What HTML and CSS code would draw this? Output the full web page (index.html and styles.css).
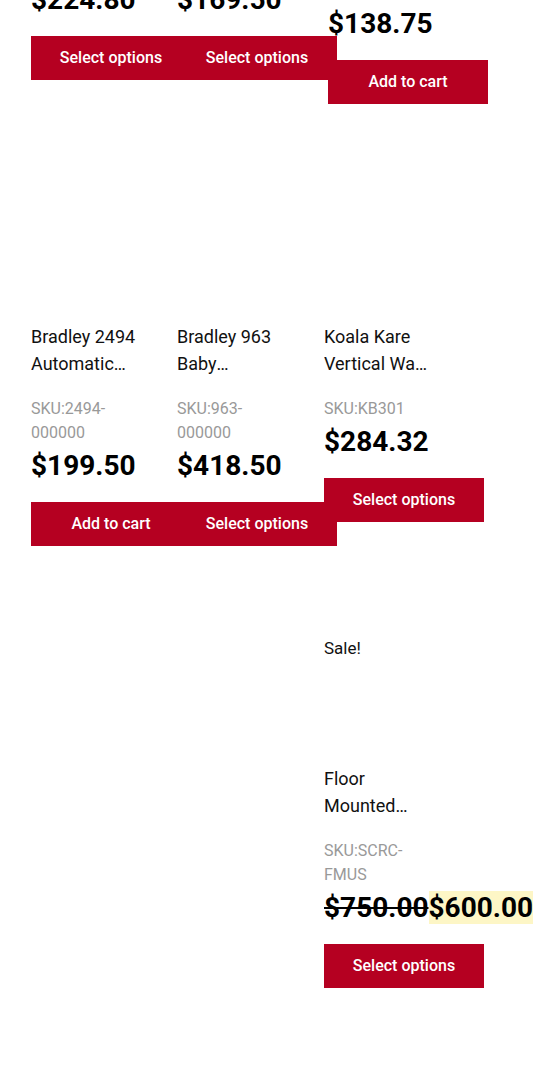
FILE: index.html
```html
<!DOCTYPE html>
<html lang="en">
<head>
<meta charset="utf-8">
<title>Products</title>
<link rel="stylesheet" href="styles.css">
</head>
<body>
<main class="shop">
  <ul class="products">
    <li class="product product--partial">
      <p class="price">$224.80</p>
      <a class="button" href="#">Select options</a>
    </li>
    <li class="product product--partial">
      <p class="price">$169.50</p>
      <a class="button" href="#">Select options</a>
    </li>
    <li class="product product--partial product--offset">
      <p class="price">$138.75</p>
      <a class="button" href="#">Add to cart</a>
    </li>

    <li class="product">
      <div class="thumb"></div>
      <h2 class="title">Bradley 2494 Automatic Baby Changing Station</h2>
      <p class="sku">SKU:2494-000000</p>
      <p class="price">$199.50</p>
      <a class="button" href="#">Add to cart</a>
    </li>
    <li class="product">
      <div class="thumb"></div>
      <h2 class="title">Bradley 963 Baby Changing Station</h2>
      <p class="sku">SKU:963-000000</p>
      <p class="price">$418.50</p>
      <a class="button" href="#">Select options</a>
    </li>
    <li class="product">
      <div class="thumb"></div>
      <h2 class="title">Koala Kare Vertical Wall Mounted Baby Changing Station</h2>
      <p class="sku">SKU:KB301</p>
      <p class="price">$284.32</p>
      <a class="button" href="#">Select options</a>
    </li>

    <li class="product product--col3">
      <div class="thumb"><span class="onsale">Sale!</span></div>
      <h2 class="title">Floor Mounted Safety Baby Changing Station</h2>
      <p class="sku">SKU:SCRC-FMUS</p>
      <p class="price"><del>$750.00</del><ins>$600.00</ins></p>
      <a class="button" href="#">Select options</a>
    </li>
  </ul>
</main>
</body>
</html>
```

FILE: styles.css
```css
* {
  box-sizing: border-box;
}

html, body {
  margin: 0;
  padding: 0;
  background: #ffffff;
}

body {
  font-family: Roboto, "Liberation Sans", Arial, sans-serif;
  color: #111111;
  overflow: hidden;
}

.shop {
  padding-left: 31px;
}

.products {
  list-style: none;
  margin: -17px 0 0 0;
  padding: 0;
  display: grid;
  grid-template-columns: 146px 147px 147px;
  align-items: start;
}

.product {
  display: flex;
  flex-direction: column;
  align-items: flex-start;
  width: 108px;
}

.product--offset {
  padding-top: 24px;
  margin-left: 4px;
}

.product--col3 {
  grid-column: 3;
}

.thumb {
  position: relative;
  width: 108px;
  height: 219px;
}

.onsale {
  position: absolute;
  left: 0;
  top: 90px;
  font-size: 17px;
  line-height: 24px;
  color: #111111;
}

.title {
  margin: 0;
  font-size: 18px;
  line-height: 27px;
  font-weight: 400;
  color: #111111;
  width: 105px;
  display: -webkit-box;
  -webkit-line-clamp: 2;
  -webkit-box-orient: vertical;
  overflow: hidden;
}

.sku {
  margin: 20px 0 0 0;
  font-size: 16px;
  line-height: 24px;
  color: #999999;
  width: 108px;
}

.price {
  margin: 4px 0 0 0;
  font-size: 28px;
  line-height: 33px;
  font-weight: 700;
  color: #000000;
  white-space: nowrap;
}

.product--partial .price {
  margin-top: 0;
}

.price del {
  text-decoration: line-through;
  color: #000000;
}

.price ins {
  text-decoration: none;
  background: #fdf6c6;
}

.button {
  margin-top: 20px;
  width: 160px;
  height: 44px;
  flex: none;
  display: flex;
  align-items: center;
  justify-content: center;
  background: #b50021;
  color: #ffffff;
  font-size: 16px;
  font-weight: 500;
  line-height: 1;
  text-decoration: none;
}
```
